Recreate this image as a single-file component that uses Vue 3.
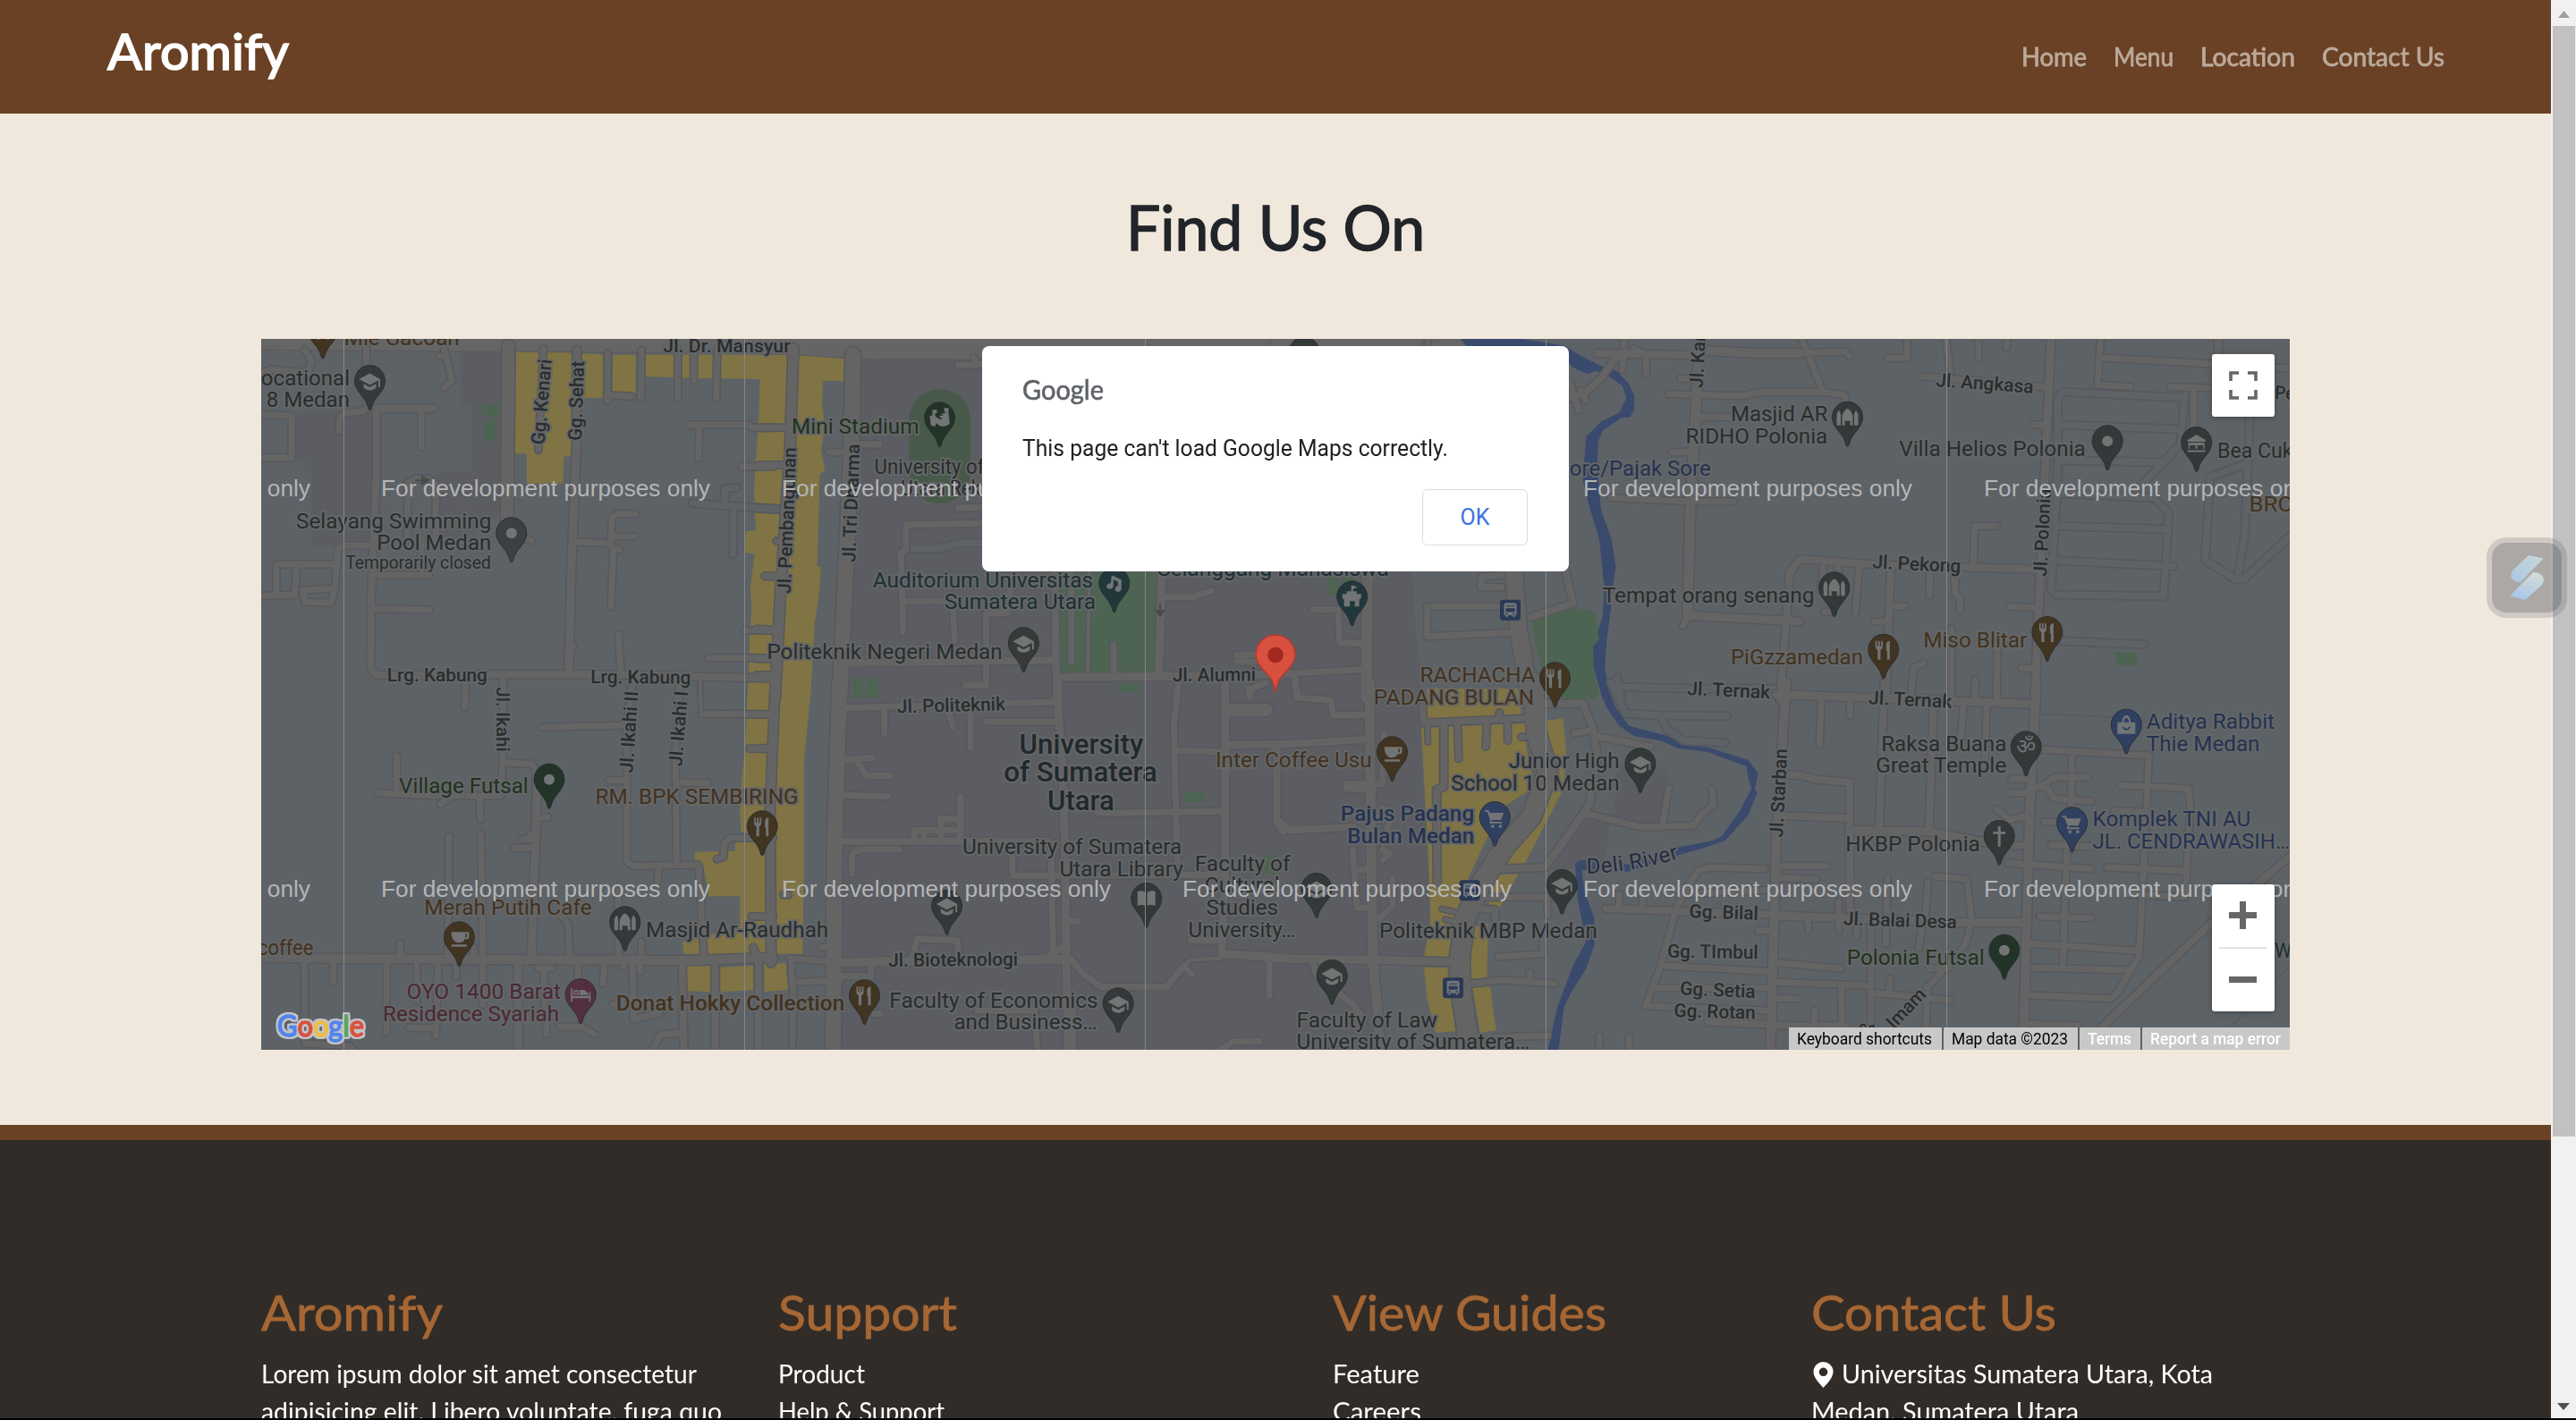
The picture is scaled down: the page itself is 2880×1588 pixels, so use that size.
<script setup>
// Scales a text run horizontally so that it fills the given width in pixels.
const vFit = {
  mounted(el, { value }) {
    el.style.display = 'inline-block'
    const natural = el.getBoundingClientRect().width
    el.style.transformOrigin = '0 50%'
    el.style.transform = `scaleX(${value / natural})`
    el.style.marginRight = value - natural + 'px'
  }
}

const nav = [
  ['Home', 73], ['Menu', 67], ['Location', 106], ['Contact Us', 137]
]
const footer = [
  { title: 'Aromify', w: 203, lines: [['Lorem ipsum dolor sit amet consectetur', 487], ['adipisicing elit. Libero voluptate, fuga quo', 515]] },
  { title: 'Support', w: 200, lines: [['Product', 97], ['Help & Support', 186]] },
  { title: 'View Guides', w: 306, lines: [['Feature', 97], ['Careers', 99]] },
  { title: 'Contact Us', w: 274, pin: true, lines: [['Universitas Sumatera Utara, Kota', 415], ['Medan, Sumatera Utara', 299]] }
]

// The map is split in eight sheets; each has its own local grid.
const sheets = { A: [280, 370], B: [850, 370], C: [1420, 370], D: [1990, 370], E: [280, 770], F: [850, 770], G: [1420, 770], H: [1990, 770] }
const KX = 580 / 1568
const KY = 1 / 3
const at = (s, x, y) => [+(sheets[s][0] + x * KX).toFixed(1), +(sheets[s][1] + y * KY).toFixed(1)]
const project = (s, str) => str.trim().split(/\s+/).map(p => at(s, ...p.split(',').map(Number)).join(',')).join(' ')
const shapes = src => Object.entries(src).flatMap(([s, list]) => list.map(p => project(s, p)))

const campus = shapes({
  A: ['635,65 760,65 760,610 640,700 560,700 560,470 667,470 667,250 635,250', '140,270 370,270 370,720 185,720 185,470 165,470 165,435 135,435'],
  B: ['285,90 1568,90 1568,1240 240,1240'],
  C: ['0,800 430,810 440,1000 455,1130 450,1230 0,1230'],
  F: ['240,0 1568,0 1568,1212 220,1212'],
  G: ['0,0 450,0 460,300 480,560 485,780 465,900 310,910 330,1212 0,1212', '1050,250 1200,270 1205,300 1180,470 1030,440 1010,590 850,610 950,430 1040,420']
})
const yellow = shapes({
  A: ['800,72 970,72 970,420 947,422 945,512 835,512 835,412 800,412', '975,75 1065,78 1065,225 975,225', '1095,80 1165,80 1165,208 1095,205',
    '1195,80 1568,80 1568,1230 1503,1230 1510,1000 1515,940 1511,860 1524,748 1495,745 1497,672 1527,670 1522,530 1535,320 1540,162 1365,158 1365,160 1195,153'],
  B: ['0,80 115,80 257,93 252,168 189,168 187,255 192,290 190,360 183,395 195,470 180,480 172,790 183,792 180,862 165,980 152,1230 0,1230'],
  E: ['1503,0 1568,0 1568,890 1310,890 1305,850 1480,800 1480,697 1385,697 1370,600 1343,578 1343,548 1465,545 1465,520 1500,480 1483,480 1480,420 1485,300 1495,200', '1318,928 1390,928 1390,1018 1320,1015', '1420,935 1520,930 1520,1012 1420,1018', '1553,930 1568,930 1568,1000 1553,1000'],
  F: ['0,0 153,0 132,250 132,610 128,890 0,890', '12,925 78,922 78,960 88,980 80,1012 12,1017'],
  C: ['545,1200 710,1200 720,1230 545,1230'],
  G: ['475,0 750,0 760,90 475,100', '457,132 770,118 775,200 800,330 700,400 605,620 560,760 540,900 465,900 485,780 478,560', '465,935 535,935 560,1150 500,1155 475,1040', '835,108 885,100 897,240 880,350 770,587 715,587 840,330', '695,625 750,622 690,745 660,720 680,650', '610,800 660,790 655,970 605,975', '612,1003 665,1000 683,1147 635,1155']
})
const green = shapes({
  A: ['700,245 753,245 753,287 700,287', '706,300 743,297 743,367 706,367'],
  B: ['905,810 1195,810 1190,1145 912,1145', '277,1165 310,1165 310,1230 277,1230', '320,1165 357,1165 357,1230 320,1230', '1081,1180 1148,1183 1148,1213 1081,1210'],
  C: ['175,828 208,828 208,885 175,885', '218,825 255,825 255,850 218,850', '788,975 920,930 980,940 1000,1030 975,1070 990,1230 840,1230'],
  D: ['1015,1077 1080,1080 1080,1125 1015,1120'],
  F: ['277,-5 310,-5 310,30 277,30', '320,-5 357,-5 357,30 320,30', '1281,348 1345,348 1345,382 1281,382', '1518,562 1568,562 1568,622 1518,622'],
  G: ['835,0 995,0 990,35 900,38']
})
const river = shapes({
  C: ['565,20 750,25 890,50 925,75 1000,118 1050,135 1085,180 1102,220 1100,265 1088,290 1062,292 1005,335 992,370 988,450 1000,600 1032,700 1045,790 1035,860 1030,930 1018,1030 1012,1130 1030,1235 1005,1235 978,1130 976,1060 995,1035 990,1010 1005,960 1010,860 995,700 965,590 945,500 955,355 1000,305 1055,275 1077,225 1065,185 1015,145 985,135 958,145 910,120 880,60 580,60'],
  G: ['1000,0 1022,0 1045,65 1085,125 1200,158 1245,185 1325,198 1445,240 1475,285 1465,340 1472,350 1445,425 1375,510 1310,535 1200,570 1080,615 942,608 950,680 980,770 980,860 955,940 910,1020 888,1070 872,1212 840,1212 868,1070 915,930 955,850 930,710 922,585 940,575 1080,590 1200,540 1340,510 1365,495 1420,410 1455,335 1445,300 1440,262 1320,212 1230,200 1180,175 1100,160 1055,125 1015,60']
})
const avenue = shapes({
  A: ['32,0 1568,0 1568,77 800,70 32,64'],
  B: ['0,0 1568,0 1568,97 305,95 110,80 0,78'],
  C: ['0,0 570,20 600,60 0,97']
})

// Road lines: an optional "width:" prefix overrides the default of 7.
const roadLines = {
  A: ['165,64 185,100 175,140 60,130 20,145', '350,40 350,120 350,240', '585,60 610,165 585,190', '572,85 590,80', '14:780,50 778,300 775,630', '20,282 125,285 125,425 20,425', '268,335 270,290 285,275 340,270 362,250', '8:555,260 380,260 380,500 365,900 363,1130 380,1155 1000,1152 1568,1165', '517,260 517,390', '475,700 475,510 500,495 540,497 560,515 560,700', '517,700 517,800', '250,783 78,783 78,885', '20,890 135,885 140,783', '370,720 280,720 265,730 255,870 245,912 165,910 158,870 255,865', '370,820 540,820', '370,933 540,935', '9:987,65 985,400 970,800 962,1150', '885,60 882,150 870,400', '1080,75 1078,235', '1078,215 1150,220', '1182,65 1180,228', '1292,65 1292,225', '1340,65 1340,165', '1411,65 1408,225', '1325,315 1500,315 1520,325 1580,325', '1357,320 1354,428', '1485,455 1580,455', '1555,823 1580,823', '1495,1005 1580,1005', '1385,1097 1580,1097', '980,708 1080,712 1100,733 1115,733', '1165,614 1110,614 1093,625 1090,710', '1160,690 1095,690', '1097,733 1090,925', '1112,1020 1120,1150', '974,1058 976,1058', '835,700 850,703', '650,1155 650,1230', '763,1155 763,1230', '1155,1165 1145,1230', '1300,1165 1290,1230', '4:1360,1165 1360,1230'],
  E: ['650,-20 648,62', '765,-20 762,250 755,360 570,360 385,350', '762,250 850,252 862,270 865,500', '9:865,350 862,500 850,890', '442,340 442,225', '600,370 575,388', '692,365 695,440', '875,432 900,432', '845,505 825,505', '845,490 850,490', '845,535 798,535', '600,495 597,890', '697,490 702,890', '882,130 1140,123', '1155,-20 1138,120 1137,580 1155,595 1355,592 1370,890', '1300,-20 1285,200 1288,590', '1085,308 1137,308', '1290,316 1380,316', '4:1360,0 1362,80', '1365,85 1580,87', '1235,595 1230,650', '1508,202 1580,202', '1410,572 1430,565 1432,520 1450,502 1580,500', '1515,765 1580,765', '1112,680 1112,910', '940,765 960,790 965,905', '675,870 675,905', '453,855 453,905', '1182,850 1182,905', '163,915 165,1190 300,1200 315,1215', '250,915 250,985', '411,920 411,1155', '503,920 503,1050', '568,920 560,1165', '480,1138 560,1140', '622,930 622,965', '702,920 702,1060', '9:808,920 810,1220', '885,940 895,1160', '870,938 910,938', '990,920 990,1000', '1070,920 1066,990', '1127,915 1127,930', '1178,915 1178,950', '1155,915 1158,1110 1235,1090', '8:1305,920 1310,1220', '8:1405,920 1405,1220', '8:1520,870 1535,920 1535,1220', '1305,1155 1240,1160 1210,1220', '935,1135 1000,1135 1040,1160', '1095,1060 1100,1060', '10:20,903 400,907 800,910 1350,912 1580,902'],
  B: ['0,325 80,325', '0,450 80,450', '50,705 60,705', '20,823 60,825', '-10,1000 60,1005', '-10,1100 50,1100', '-10,1155 45,1155', '11:100,60 90,400 60,900 45,1230', '17:280,80 275,400 250,1000 240,1235', '598,115 680,112', '645,90 650,95', '360,382 290,380', '208,407 260,407', '598,594 680,592', '680,645 440,650 440,735 425,745 432,1010', '435,908 580,905 750,900 755,870', '583,940 588,1040', '620,1190 683,1188 683,950 750,945', '8:270,1115 890,1105', '8:890,790 895,1230', '940,790 940,1110', '4:995,790 990,1145', '1068,1055 1068,1145', '9:895,1162 1400,1158 1600,1150', '9:1215,790 1205,1140', '1215,893 1305,893 1365,872', '8:1405,1160 1405,1230', '1265,1180 1255,1230', '1440,1088 1500,1085', '1440,1110 1500,1110', '1480,1230 1485,1200 1530,1180'],
  F: ['10:45,-5 30,400 33,920', '17:240,-20 225,500 220,1220', '-10,87 40,87', '-10,200 35,200', '70,692 85,692', '255,65 885,45', '375,70 375,150', '570,80 583,130', '636,70 636,200', '890,112 685,112', '9:900,-20 900,60 915,300 920,500 925,900 930,1220', '255,240 340,232', '290,240 320,292 395,292', '255,358 385,362', '8:245,512 870,512', '605,360 605,500', '545,500 545,437 600,437', '465,500 465,475 600,475', '495,480 495,500', '420,540 300,540 277,555 277,620', '760,520 763,628 1400,625', '878,520 885,890', '870,900 925,860', '930,780 960,780', '460,900 475,840 595,845 600,900', '10:245,918 930,908', '940,908 970,950 1030,1002 1230,1000 1280,930', '4:1280,930 1300,910 1390,905', '1280,930 1305,960', '90,905 250,918', '95,910 95,985 240,980', '335,920 335,965 245,965', '100,980 97,1220', '185,867 200,867', '345,1092 365,1092', '655,1080 830,1080 838,1220', '945,1050 945,1220', '1380,1220 1430,1185 1510,1183', '1265,-20 1250,120 1260,580', '1260,208 1400,213', '9:1405,-20 1405,600 1395,890 1580,902', '14:1420,72 1530,72', '8:1405,190 1580,185', '1020,418 1400,412', '1475,0 1480,30', '1563,200 1560,450 1580,480', '1540,905 1538,1030', '1300,845 1395,845'],
  C: ['12:295,790 290,1230', '130,935 205,935 210,1045 290,1050', '50,1150 300,1135', '75,1160 85,1230', '19:735,780 750,1000 785,1230', '8:890,790 915,915 790,960', '700,925 475,925 475,1025 740,1012', '700,820 640,825 635,860 700,860', '475,45 480,15', '8:990,75 1300,82', '1070,20 1065,130', '1100,60 1135,80 1137,140', '8:1045,90 1000,160 950,210 905,225', '905,170 932,265', '940,200 955,235', '11:1300,10 1290,200 1270,600 1262,950', '10:1300,65 1480,75 1600,75', '1240,160 1290,162', '1205,212 1430,218 1480,205 1600,205', '1290,288 1400,290', '1215,408 1270,405', '1030,560 1270,572 1400,573', '9:1262,955 1600,975', '1262,960 1248,990'],
  G: ['11:300,-20 305,480 310,900 335,1220', '22:795,-20 805,150 840,280 790,430 710,530 640,650 590,770 573,900 575,1000 605,1220', '8:835,50 945,50 975,130 990,230 965,390 870,540 830,600 700,605', '920,150 975,140', '985,160 1150,195', '955,420 1120,465 1280,460 1305,420 1340,390 1335,335', '1185,465 1205,335', '460,60 465,115 770,100', '693,80 693,100', '5:475,125 477,180', '8:525,120 525,330 503,340 505,650', '567,120 570,235', '655,115 652,195', '718,110 718,175', '760,163 770,163', '75,-20 80,30 185,40 190,90 290,88', '8:0,190 300,170', '8:20,190 20,440 60,475 250,465', '230,320 300,320 340,320 345,150', '230,320 230,335 300,340', '250,540 262,735 300,735', '270,610 300,605', '340,400 365,420 345,520', '340,540 362,555 340,575', '370,640 370,730 330,770', '9:-10,905 310,910 540,917', '130,920 140,960 250,1060 285,1110', '825,830 825,890 690,900', '608,990 700,978 860,990', '785,950 785,975', '650,700 835,700 840,760', '5:520,740 560,750', '5:530,775 570,785', '640,740 680,740 680,770', '1495,605 1330,600 1295,610 1270,650 1230,730 1180,930 1135,1065 1500,1080', '1240,690 1520,675', '8:1015,738 1560,760', '1055,690 1055,738', '1125,690 1125,738', '1475,812 1520,812', '1190,930 1520,950', '1160,1005 1520,1005', '1325,1120 1568,1130', '840,1165 680,1170', '995,1165 995,1220', '1085,1170 1085,1220', '10:1560,-20 1530,500 1520,900 1512,1220'],
  D: ['60,10 130,205 195,215 200,240', '-10,75 200,70 210,85', '-10,205 130,205', '385,10 385,90 325,92', '500,10 515,140', '600,10 600,90', '690,10 685,55', '425,152 800,188', '765,315 800,315', '970,10 960,180 1060,188', '975,90 1560,127', '8:1325,10 1325,80', '1180,188 1310,192', '1250,200 1250,330', '585,780 588,655 655,655', '8:0,1240 30,810 60,765 300,785 790,800', '130,790 125,870', '175,790 175,830', '240,790 228,945', '8:335,800 320,1230', '453,800 452,890', '528,800 530,880 545,900 545,940', '380,925 335,925', '695,925 780,930', '285,975 330,975', '-10,970 20,970', '135,943 160,943', '518,1000 518,1230', '657,1060 655,1230', '435,1115 405,1130 395,1230', '590,1170 588,1230', '730,1132 780,1132', '9:820,10 800,500 780,1000 770,1235'],
  H: ['9:-10,20 300,32 760,52', '125,30 120,190', '212,40 212,90', '8:315,-20 300,470', '8:465,40 450,480', '555,50 545,190', '590,-20 590,40', '655,-20 655,40', '625,50 620,240', '790,205 1115,225 1100,600 1085,900 1020,1020 1000,1040 740,1028', '882,215 880,400', '930,298 830,298 800,320 830,370 940,378', '760,330 800,330', '700,303 750,303', '700,350 750,350', '655,405 695,440 745,428', '800,447 870,447 855,930', '1030,325 1235,335 1240,400 1225,700 1050,690', '1010,410 1110,415', '820,525 940,530', '700,527 750,527', '690,585 940,605', '990,600 1225,612', '785,765 940,770', '750,855 1080,880', '765,937 1060,945', '8:-10,290 60,290 110,305 210,315 212,740', '8:-10,425 210,435', '9:212,475 450,480 640,520', '-10,595 140,595', '-10,635 110,640', '9:-10,762 200,770 540,785 740,785', '178,715 178,810', '85,780 87,810', '232,785 232,830', '325,635 320,855', '447,650 440,760', '470,630 565,640 580,780 560,860 450,1000', '275,800 275,1220', '430,790 420,870', '450,940 510,935', '-10,920 185,940', '-10,985 270,997', '185,1000 190,1220', '275,1020 515,1045', '333,975 330,1015', '-10,1040 50,1040', '105,1080 105,1220', '445,1000 440,1220', '-10,1130 200,1130', '740,1125 900,1130', '8:960,1150 1300,790 1560,545', '10:775,-20 755,400 735,1220']
}
const roads = Object.entries(roadLines).flatMap(([s, list]) => list.map(line => {
  const [w, pts] = line.includes(':') ? line.split(':') : [7, line]
  return { w: +w, pts: project(s, pts) }
}))
const lanes = shapes({
  A: ['1470,525 1435,530 1432,575', '1337,578 1580,597', '1460,600 1458,750'],
  B: ['-10,595 72,600', '440,730 545,730 600,712 680,712'],
  C: ['1050,1165 1060,1235', '1050,1195 1260,1200 1560,1200'],
  D: ['840,560 840,225 855,205 1225,225', '840,315 1200,330', '850,435 1160,440 1210,380 1225,210', '840,430 835,560 820,870 835,885 1160,890 1175,610 1130,560 840,545', '840,655 1170,665', '830,770 1190,790', '1160,440 1090,520', '1400,450 1300,490 1285,770 1380,835 1400,835 1560,670', '1420,290 1405,680 1385,820', '845,1040 1100,1052'],
  G: ['1030,-20 1075,85 1180,90 1380,92', '1180,95 1200,135 1250,175 1375,182']
})
const hairlines = shapes({ H: ['780,85 1000,95 1110,110', '1350,1150 1560,910', '1400,980 1560,800'] })

const ink = '#292d2f', brown = '#43321f', teal = '#1c3034', navy = '#243352', olive = '#21321f', plum = '#4a2835'
// [sheet, x1, y1, x2, y2, text, size, colour, weight] where the two points span the baseline
const labels = [
  ['A', 283, 47, 632, 47, 'Mie Gacoan', 24, brown, 400],
  ['A', 32, 182, 300, 182, 'ocational', 24, ink, 400], ['A', 48, 256, 300, 256, '8 Medan', 24, ink, 400],
  ['A', 138, 662, 728, 662, 'Selayang Swimming', 24, ink, 400], ['A', 382, 736, 728, 736, 'Pool Medan', 24, ink, 400], ['A', 287, 797, 727, 797, 'Temporarily closed', 20, ink, 400],
  ['A', 1247, 71, 1632, 71, 'Jl. Dr. Mansyur', 20.5, ink, 500],
  ['A', 888, 383, 910, 97, 'Gg. Kenari', 21, ink, 500], ['A', 1000, 369, 1009, 102, 'Gg. Sehat', 21, ink, 500],
  ['A', 413, 1176, 716, 1176, 'Lrg. Kabung', 21, ink, 500], ['A', 1028, 1182, 1331, 1184, 'Lrg. Kabung', 21, ink, 500],
  ['B', 95, 345, 480, 345, 'Mini Stadium', 24, olive, 400], ['B', 345, 480, 735, 480, 'University of N', 24, ink, 400], ['B', 425, 553, 735, 553, 'Utara Rektor', 24, ink, 400],
  ['B', 91, 882, 109, 392, 'Jl. Pembangunan', 21, ink, 500], ['B', 287, 777, 301, 380, 'Jl. Tri Dharma', 21, ink, 500],
  ['B', 340, 860, 1006, 860, 'Auditorium Universitas', 24, teal, 400], ['B', 556, 934, 1014, 934, 'Sumatera Utara', 24, teal, 400],
  ['B', 20, 1100, 732, 1100, 'Politeknik Negeri Medan', 24, ink, 400], ['B', 1200, 823, 1900, 823, 'Selanggang Mahasiswa', 24, teal, 400],
  ['B', 1246, 1176, 1498, 1174, 'Jl. Alumni', 21, ink, 500],
  ['C', 905, 487, 1332, 487, 'ore/Pajak Sore', 24, navy, 400], ['C', 1307, 192, 1316, 15, 'Jl. Kar', 21, ink, 500],
  ['C', 1392, 303, 1685, 303, 'Masjid AR', 24, ink, 400], ['C', 1256, 377, 1685, 377, 'RIDHO Polonia', 24, ink, 400],
  ['C', 1005, 912, 1645, 912, 'Tempat orang senang', 24, ink, 400],
  ['C', 453, 1180, 802, 1180, 'RACHACHA', 24, brown, 400], ['G', 313, 53, 798, 53, 'PADANG BULAN', 24, brown, 400],
  ['C', 1392, 1120, 1792, 1120, 'PiGzzamedan', 24, brown, 400], ['C', 1260, 1221, 1511, 1234, 'Jl. Ternak', 21, ink, 500],
  ['D', 470, 186, 765, 209, 'Jl. Angkasa', 21, ink, 500], ['D', 360, 419, 924, 419, 'Villa Helios Polonia', 24, ink, 400],
  ['D', 1322, 425, 1600, 425, 'Bea Cukai', 24, ink, 400], ['D', 1495, 228, 1600, 234, 'Peta', 21, ink, 500], ['D', 1418, 605, 1640, 605, 'BROTO', 24, brown, 400],
  ['D', 806, 825, 819, 530, 'Jl. Polonia', 21, ink, 500], ['D', 279, 796, 546, 811, 'Jl. Pekong', 21, ink, 500], ['D', 433, 1062, 747, 1062, 'Miso Blitar', 24, brown, 400],
  ['E', 744, -5, 744, 212, 'Jl. Ikahi', 21, ink, 500], ['E', 1155, 284, 1172, 10, 'Jl. Ikahi II', 21, ink, 500], ['E', 1304, 262, 1322, 10, 'Jl. Ikahi I', 21, ink, 500],
  ['E', 449, 352, 840, 352, 'Village Futsal', 24, olive, 400], ['E', 1042, 387, 1656, 387, 'RM. BPK SEMBIRING', 24, brown, 400],
  ['E', 525, 758, 1032, 758, 'Merah Putih Cafe', 24, brown, 400], ['E', 22, 893, 190, 893, 'coffee', 24, brown, 400],
  ['E', 1195, 833, 1747, 833, 'Masjid Ar-Raudhah', 24, ink, 400], ['E', 472, 1041, 938, 1041, 'OYO 1400 Barat', 24, plum, 400], ['E', 400, 1115, 933, 1115, 'Residence Syariah', 24, plum, 400],
  ['E', 1105, 1080, 1796, 1080, 'Donat Hokky Collection', 24, brown, 500],
  ['F', 414, 82, 741, 73, 'Jl. Politeknik', 21, ink, 500], ['F', 783, 218, 1158, 218, 'University', 32, '#20292c', 500], ['F', 736, 313, 1200, 313, 'of Sumatera', 32, '#20292c', 500], ['F', 868, 407, 1070, 407, 'Utara', 32, '#20292c', 500],
  ['F', 611, 555, 1274, 555, 'University of Sumatera', 24, ink, 400], ['F', 904, 629, 1278, 629, 'Utara Library', 24, ink, 400],
  ['F', 1313, 612, 1602, 612, 'Faculty of', 24, ink, 400], ['F', 1343, 685, 1570, 685, 'Cultural', 24, ink, 400], ['F', 1348, 760, 1565, 760, 'Studies', 24, ink, 400], ['F', 1294, 833, 1618, 833, 'University…', 24, ink, 400],
  ['F', 387, 933, 779, 929, 'Jl. Bioteknologi', 21, ink, 500], ['F', 390, 1070, 1021, 1070, 'Faculty of Economics', 24, ink, 400], ['F', 585, 1143, 1018, 1143, 'and Business…', 24, ink, 400],
  ['F', 1376, 263, 1848, 263, 'Inter Coffee Usu', 24, brown, 400],
  ['G', 721, 267, 1056, 267, 'Junior High', 24, ink, 400], ['G', 547, 341, 1056, 341, 'School 10 Medan', 24, ink, 400],
  ['G', 213, 445, 617, 445, 'Pajus Padang', 24, navy, 500], ['G', 233, 518, 617, 518, 'Bulan Medan', 24, navy, 500],
  ['G', 330, 836, 989, 836, 'Politeknik MBP Medan', 24, ink, 400], ['G', 80, 1137, 505, 1137, 'Faculty of Law', 24, ink, 400], ['G', 80, 1210, 785, 1210, 'University of Sumatera…', 24, ink, 400],
  ['G', 1266, 768, 1475, 776, 'Gg. Bilal', 21, ink, 500], ['G', 1200, 902, 1475, 907, 'Gg. TImbul', 21, ink, 500], ['G', 1238, 1027, 1466, 1038, 'Gg. Setia', 21, ink, 500], ['G', 1220, 1101, 1467, 1109, 'Gg. Rotan', 21, ink, 500],
  ['G', 1549, 500, 1563, 203, 'Jl. Starban', 21, ink, 500],
  ['H', 267, 52, 519, 65, 'Jl. Ternak', 21, ink, 500], ['H', 306, 209, 685, 209, 'Raksa Buana', 24, ink, 400], ['H', 289, 282, 685, 282, 'Great Temple', 24, ink, 400],
  ['H', 1108, 135, 1495, 135, 'Aditya Rabbit', 24, navy, 400], ['H', 1108, 209, 1450, 209, 'Thie Medan', 24, navy, 400],
  ['H', 945, 463, 1423, 463, 'Komplek TNI AU', 24, navy, 400], ['H', 945, 537, 1541, 537, 'JL. CENDRAWASIH…', 24, navy, 400],
  ['H', 198, 545, 605, 545, 'HKBP Polonia', 24, ink, 400], ['H', 191, 793, 534, 805, 'Jl. Balai Desa', 21, ink, 500], ['H', 202, 927, 618, 927, 'Polonia Futsal', 24, olive, 400],
  ['H', 345, 1145, 445, 1030, 'Imam', 21, ink, 500], ['H', 245, 1172, 305, 1155, 'Gg.', 21, ink, 500], ['H', 1495, 902, 1620, 902, 'WAK', 24, teal, 400]
].map(([s, x1, y1, x2, y2, text, size, fill, weight]) => {
  const [ax, ay] = at(s, x1, y1)
  const [bx, by] = at(s, x2, y2)
  const len = Math.hypot(bx - ax, by - ay)
  return { text, size, fill, weight, len, move: `translate(${ax} ${ay}) rotate(${Math.atan2(by - ay, bx - ax) * 180 / Math.PI})` }
})

const grey = '#333839', umber = '#413420', pine = '#223328', sea = '#21373b', steel = '#2f4060'
const pins = [
  ['A', 219, -4, 'fork', umber], ['A', 361, 168, 'grad', '#36393c'], ['A', 789, 679, 'dot', '#3b4142'], ['B', 542, 292, 'stadium', pine], ['B', 1070, 847, 'music', sea], ['B', 796, 1048, 'grad', '#373a39'],
  ['C', 103, 72, 'dot', grey], ['C', 248, 892, 'castle', sea], ['C', 861, 1165, 'fork', umber], ['D', 204, 290, 'mosque', grey], ['D', 990, 370, 'dot', grey], ['D', 1259, 375, 'bank', grey], ['D', 164, 862, 'mosque', grey],
  ['D', 808, 1011, 'fork', umber], ['D', 313, 1070, 'fork', umber], ['E', 903, 305, 'dot', pine], ['E', 1547, 463, 'fork', umber], ['E', 631, 835, 'cup', umber], ['E', 1132, 784, 'mosque', grey], ['E', 998, 1027, 'bed', '#53303f'],
  ['F', 564, 729, 'grad', grey], ['F', 1167, 705, 'book', grey], ['F', 315, 1030, 'fork', umber], ['F', 1082, 1057, 'grad', grey], ['G', 369, 214, 'cup', umber], ['G', 1119, 253, 'grad', grey], ['G', 679, 432, 'cart', steel],
  ['G', 140, 672, 'grad', grey], ['G', 882, 660, 'grad', grey], ['G', 187, 963, 'grad', grey], ['H', 1047, 122, 'bag', steel], ['H', 744, 196, 'om', grey], ['H', 663, 495, 'cross', grey], ['H', 883, 451, 'cart', steel], ['H', 678, 878, 'dot', pine]
].map(([s, x, y, icon, fill]) => ({ icon, fill, move: `translate(${at(s, x, y).join(' ')})` }))
const glyphs = {
  dot: 'M-6 0a6 6 0 1 0 12 0a6 6 0 1 0-12 0z',
  grad: 'M0-8.5L-12-2 0 4.5 9.5-.6V7h2V-2zM-7 3.2V7.5C-3 11.5 3 11.5 7 7.500V3.200L0 7z',
  fork: 'M-9-10h1.800v6h1.300v-6h1.800v6h1.300v-6H-1v7q0 2.200-2.400 3V11h-3.200V0Q-9-.8-9-3zM3 1V-6Q3-9.500 7-10V11H4V1z',
  cup: 'M-9-6H10q1 0 1 1V0q0 2-2 2H6Q5 6-1 6-8 6-9-6zM7-4V0h1.500V-4zM-8.500 8H8.500v2.500H-8.500z',
  mosque: 'M-12 9V-3Q-11-6-9.500-8-8-6-7.500-3V9zM12 9V-3Q11-6 9.500-8 8-6 7.500-3V9zM-6 9V-2Q-4-8 0-10 4-8 6-2V9H3V4H-3V9z',
  bank: 'M-10-3L0-9 10-3V-1H-10zM-9 0H9V7H7.500V3H1V7H-1V3H-7.500V7H-9zM-10 8.500h20v2h-20z',
  castle: 'M-1-13l7 2-5 3v2h4v3h5v5l-2 1V11H3V5H-2.500v6H-9V3l-2-1v-5h5v-3h5z',
  music: 'M-3-9L8-4V7Q5 12 1 8 0 4 4 3V-2L-1-4V4Q-5 9-9 4-8 0-4 0z',
  stadium: 'M-8-9h5v4h-2v3q5 5 8 3L-1-2 5-3 1-4 8-6 5-7V-11h5v6l1 8V7Q6 11 0 9L-4 6-5 10-10 8-11-2-8-3z',
  book: 'M-10-8Q-5-10-.8-7V8Q-5 6-10 8zM10-8Q5-10 .8-7V8Q5 6 10 8z',
  bed: 'M-11-7h1.800V1.500H9.500V-3H11V8H9.500V4H-9.200V8H-11zM-8-5h6V0h-6zM-6.500-3.500v2h3v-2zM-1-5Q6-7 9 .5H-1z',
  cart: 'M-11-8h4l1.500 3H10L7 3H-4L-3 5H8v2H-6L-5 3-8.500-6H-11zM-4 8.500h3.500v3H-4zM4.500 8.500H8v3H4.500z',
  bag: 'M-10-3H-5Q-4-11 0-11T5-3H10V10H-10zM-3-3H3Q2-8 0-8T-3-3zM-5 2Q0 10 5 2H3Q0 6-3 2z',
  cross: 'M-1.500-11h3v6H7v2.800H1.500V12h-3V-2.200H-7V-5h5.500z'
}
const buses = [['C', 726, 937], ['G', 603, 677], ['G', 553, 1004]].map(([s, x, y]) => `translate(${at(s, x, y).join(' ')})`)
const tiles = [384.5, 832.5, 1280.500, 1728.500, 2176.500]
const marks = [-21, 426, 874, 1322, 1770, 2218].flatMap(x => [[x, 554.500], [x, 1002.500]])
const wordmark = [['G', '#5383ec'], ['o', '#d85140'], ['o', '#f0bd42'], ['g', '#5383ec'], ['l', '#58a65c'], ['e', '#d85140']]
</script>

<template>
  <div class="screen">
    <div class="page">
      <header class="bar">
        <span class="brand"><span v-fit="203">Aromify</span></span>
        <nav class="links">
          <a v-for="[t, w] in nav" :key="t" :style="{ width: w + 'px' }"><span v-fit="w">{{ t }}</span></a>
        </nav>
      </header>

      <main class="main">
        <h1 class="title"><span v-fit="334">Find Us On</span></h1>
        <section class="map">
          <svg class="canvas" viewBox="292 379 2268 795" width="2268" height="795">
            <rect x="292" y="379" width="2268" height="795" fill="#5d6266" />
            <polygon v-for="(p, i) in campus" :key="'c' + i" :points="p" fill="#5b5d62" />
            <polygon v-for="(p, i) in yellow" :key="'y' + i" :points="p" fill="#807444" />
            <polygon v-for="(p, i) in green" :key="'g' + i" :points="p" fill="#4e6452" />
            <rect x="1016.500" y="435" width="68.500" height="128" rx="34" ry="34" fill="#475a4a" />
            <polygon v-for="(p, i) in river" :key="'r' + i" :points="p" fill="#3a4a6d" />
            <polygon v-for="(p, i) in avenue" :key="'a' + i" :points="p" fill="#656565" stroke="#5a5a5e" stroke-width="1" />
            <g fill="none" stroke-linecap="round" stroke-linejoin="round">
              <polyline v-for="(p, i) in lanes" :key="'lc' + i" :points="p" stroke="#56585d" stroke-width="11" />
              <polyline v-for="(p, i) in lanes" :key="'lf' + i" :points="p" stroke="#5d6266" stroke-width="7.500" />
              <polyline v-for="(p, i) in hairlines" :key="'h' + i" :points="p" stroke="#585b60" stroke-width="1.500" />
              <polyline v-for="(r, i) in roads" :key="'rc' + i" :points="r.pts" stroke="#57585c" :stroke-width="r.w + 3" />
              <polyline v-for="(r, i) in roads" :key="'rf' + i" :points="r.pts" stroke="#646464" :stroke-width="r.w" />
            </g>
            <g fill="#4a4b4c" stroke="#4a4b4c" stroke-width="2">
              <path d="M464 537h10M472 533l7 4-7 4z" /><path d="M1297 675v10M1293 683l4 6 4-6z" />
            </g>
            <g class="label">
              <text v-for="(l, i) in labels" :key="'l' + i" :transform="l.move" :font-size="l.size" :font-weight="l.weight" :fill="l.fill" :textLength="l.len" lengthAdjust="spacingAndGlyphs">{{ l.text }}</text>
              <text font-size="24" fill="#242b45"><textPath href="#deli" textLength="105">Deli River</textPath></text>
            </g>
            <path id="deli" d="M1774 977Q1825 976 1880 959" fill="none" />
            <g v-for="(p, i) in pins" :key="'p' + i" :transform="p.move">
              <path d="M0 32.500C-2 32.500-2 28-4 24-8 16-17 10-17 0A17 17.500 0 0 1 17 0C17 10 8 16 4 24 2 28 2 32.500 0 32.500z" :fill="p.fill" stroke="#2b2f31" stroke-width="1" />
              <text v-if="p.icon === 'om'" class="om" y="8" text-anchor="middle">ॐ</text>
              <path v-else :d="glyphs[p.icon]" fill="#727475" fill-rule="evenodd" />
            </g>
            <g v-for="(b, i) in buses" :key="'b' + i" :transform="b">
              <rect x="-11.500" y="-11.500" width="23" height="23" rx="3" fill="#293956" />
              <path d="M-7-6q0-2 3-2H4q3 0 3 2V6H5V8H3V6H-3V8H-5V6H-7zM-4.500-5v1H4.500v-1zM-5-2V2H5V-2zM-5 3.500v1.500h2V3.500zM3 3.500V5H5V3.500z" fill="#72757a" fill-rule="evenodd" />
            </g>
            <path d="M1426 775C1424 760 1419 756 1413 750 1408 744 1404 739 1404 732A22 22 0 0 1 1448 732C1448 739 1444 744 1439 750 1433 756 1428 760 1426 775z" fill="#d8503f" stroke="#b53a2e" stroke-width="1.500" />
            <circle cx="1426" cy="732.500" r="8.800" fill="#a3281f" />
            <line v-for="x in tiles" :key="x" :x1="x" :x2="x" y1="379" y2="1174" stroke="#85888a" stroke-width="1" />
            <g class="mark">
              <text v-for="([x, y], i) in marks" :key="'m' + i" :x="x" :y="y" textLength="368" lengthAdjust="spacingAndGlyphs">For development purposes only</text>
            </g>
            <g class="logo">
              <text x="310" y="1159" textLength="97" lengthAdjust="spacingAndGlyphs"><tspan v-for="([c, f], i) in wordmark" :key="i" :fill="f" :stroke="f">{{ c }}</tspan></text>
            </g>
          </svg>

          <div class="ctl full">
            <svg width="32" height="32" viewBox="0 0 32 32"><path d="M2 11V2h9M21 2h9v9M30 21v9h-9M11 30H2v-9" fill="none" stroke="#666" stroke-width="3.600" /></svg>
          </div>
          <div class="ctl zoom">
            <svg width="70" height="142" viewBox="0 0 70 142"><path d="M19 34.500H50M34.500 19V50M19 106.500H50" stroke="#666" stroke-width="7" /><path d="M8 71H61" stroke="#e4e4e4" stroke-width="2" /></svg>
          </div>
          <div class="terms">
            <span class="k1"><b v-fit="151">Keyboard shortcuts</b></span>
            <span class="k2"><b v-fit="130">Map data ©2023</b></span>
            <span class="k3 pale"><b v-fit="49">Terms</b></span>
            <span class="k4 pale"><b v-fit="146">Report a map error</b></span>
          </div>
          <div class="dialog">
            <div class="dlogo"><span v-fit="91">Google</span></div>
            <p><span v-fit="476">This page can't load Google Maps correctly.</span></p>
            <button class="ok">OK</button>
          </div>
        </section>
      </main>

      <footer class="foot">
        <div v-for="(c, i) in footer" :key="c.title" :class="['col', 'col' + i]">
          <h2><span v-fit="c.w">{{ c.title }}</span></h2>
          <p v-for="([t, w], j) in c.lines" :key="t">
            <svg v-if="c.pin && j === 0" class="loc" width="23" height="29" viewBox="0 0 23 29"><path d="M11.500 0A11 11 0 0 0 .5 11C.5 18 8 25 11.500 29 15 25 22.500 18 22.500 11A11 11 0 0 0 11.500 0zM11.500 6.500a4.800 4.800 0 1 1 0 9.600 4.800 4.800 0 0 1 0-9.600z" fill="#fff" fill-rule="evenodd" /></svg><span v-fit="w">{{ t }}</span>
          </p>
        </div>
      </footer>
    </div>

    <div class="scroll">
      <svg class="up" width="13" height="8" viewBox="0 0 13 8"><path d="M0 8L6.500 0 13 8z" fill="#a0a0a0" /></svg>
      <div class="thumb"></div>
      <svg class="down" width="14" height="8" viewBox="0 0 14 8"><path d="M0 0h14L7 8z" fill="#505050" /></svg>
    </div>

    <div class="widget">
      <svg width="38" height="51" viewBox="0 0 38 51">
        <defs>
          <linearGradient id="wa" x1="1" y1="0" x2="0" y2="1"><stop offset="0" stop-color="#cbd8da" /><stop offset="1" stop-color="#a9c6e4" /></linearGradient>
          <linearGradient id="wb" x1=".8" y1="0" x2=".4" y2="1"><stop offset="0" stop-color="#d6dcd8" /><stop offset="1" stop-color="#a8c6e8" /></linearGradient>
        </defs>
        <path d="M21 0L37.500 3.500 12 30Q3 30 1 23 1 19 4 16z" fill="url(#wa)" />
        <path d="M26 19Q35 19 38 26 38 31 35 34L17 50 0 45.500z" fill="url(#wb)" />
      </svg>
    </div>
    <div class="edge"></div>
  </div>
</template>

<style>
body { margin: 0; overflow: hidden; }
</style>

<style scoped>
.screen { position: relative; display: flex; width: 2880px; height: 1588px; overflow: hidden; background: #f1e8dd; font-family: Lato, sans-serif; white-space: nowrap; }
.page { width: 2852px; height: 1588px; display: flex; flex-direction: column; overflow: hidden; }
.bar { height: 127px; flex: none; box-sizing: border-box; padding: 0 119px 0 120px; background: #6a4124; display: flex; justify-content: space-between; }
.brand { font-size: 55px; font-weight: 500; line-height: 66px; margin-top: 24px; color: #fff; -webkit-text-stroke: 1.4px #fff; }
.links { display: flex; gap: 30px; margin-top: 43px; }
.links a { font-size: 28px; line-height: 40px; font-weight: 400; color: #bba99b; -webkit-text-stroke: .8px #bba99b; }
.main { flex: none; height: 1131px; display: flex; flex-direction: column; align-items: center; }
.title { margin: 0; height: 252px; box-sizing: border-box; padding-top: 82px; font-size: 70px; line-height: 88px; font-weight: 400; color: #212529; -webkit-text-stroke: 1.5px #212529; }
.map { position: relative; width: 2268px; height: 795px; overflow: hidden; font-family: Roboto, sans-serif; }
.canvas { display: block; }
.label text { paint-order: stroke; stroke: #646667; stroke-width: 4px; stroke-linejoin: round; font-family: Roboto, sans-serif; }
.om { font-size: 24px; fill: #727475; font-family: "Noto Sans", sans-serif; }
.mark text { font-family: "Liberation Sans", Arial, sans-serif; font-size: 26px; fill: #b4b5b7; }
.logo { filter: drop-shadow(2px 0 0 #c2c4c8) drop-shadow(-2px 0 0 #c2c4c8) drop-shadow(0 2px 0 #c2c4c8) drop-shadow(0 -2px 0 #c2c4c8); }
.logo text { font-family: Lato, sans-serif; font-size: 33px; font-weight: 400; stroke-width: 1.6px; stroke-linejoin: round; }
.ctl { position: absolute; width: 70px; right: 17px; background: #fff; border-radius: 3px; box-shadow: 0 1px 6px rgba(0, 0, 0, .3); display: flex; align-items: center; justify-content: center; }
.full { top: 17px; height: 70px; }
.zoom { top: 610px; height: 142px; }
.terms { position: absolute; right: 0; bottom: 0; height: 25px; display: flex; gap: 2px; font-size: 18px; line-height: 26px; color: #000; }
.terms span { background: #c8c8c8; box-sizing: border-box; padding-left: 9px; }
.terms b { font-weight: 400; }
.terms .pale { color: #fff; }
.terms .pale b { font-weight: 500; }
.k1 { width: 171px; }
.k2 { width: 150px; }
.k3 { width: 68px; }
.k4 { width: 165px; }
.dialog { position: absolute; left: 806px; top: 8px; width: 656px; height: 252px; box-sizing: border-box; border-radius: 8px; background: #fff; padding: 28px 46px 29px 45px; display: flex; flex-direction: column; }
.dlogo { font-family: Lato, sans-serif; font-size: 31px; line-height: 40px; font-weight: 400; color: #5f6368; -webkit-text-stroke: .6px #5f6368; }
.dialog p { margin: 31px 0 0; font-size: 25px; line-height: 32px; color: #202124; }
.ok { align-self: flex-end; margin-top: 29px; width: 118px; height: 63px; border: 1px solid #dadce0; border-radius: 6px; background: #fff; color: #3b72e0; font: 400 25px Roboto, sans-serif; flex: none; }
.foot { flex: none; height: 330px; box-sizing: border-box; border-top: 17px solid #6a4124; background: #312c27; padding: 156px 0 0 292px; display: flex; color: #fff; overflow: hidden; }
.col0 { width: 578px; }
.col1 { width: 620px; }
.col2 { width: 535px; }
.col h2 { margin: 0; font-size: 55px; line-height: 72px; height: 84px; font-weight: 400; color: #a66734; -webkit-text-stroke: .8px #a66734; }
.col p { margin: 0; font-size: 28px; line-height: 42px; height: 42px; font-weight: 400; display: flex; }
.loc { margin: 8px 9px 0 2px; flex: none; }
.scroll { width: 28px; height: 1588px; background: #f1f1f1; display: flex; flex-direction: column; }
.up { margin: 12px 0 9px 8px; flex: none; }
.thumb { width: 25px; margin-left: 2px; height: 1242px; background: #c1c1c1; flex: none; }
.down { margin: 298px 0 0 7px; flex: none; }
.widget { position: absolute; left: 2780px; top: 601px; width: 90px; height: 90px; box-sizing: border-box; border: 6px solid rgba(80, 80, 95, .2); border-radius: 22px; background: rgba(60, 62, 75, .38); background-clip: padding-box; display: flex; align-items: center; justify-content: center; }
.edge { position: absolute; left: 0; bottom: 0; width: 2880px; height: 2px; background: #000; }
</style>
